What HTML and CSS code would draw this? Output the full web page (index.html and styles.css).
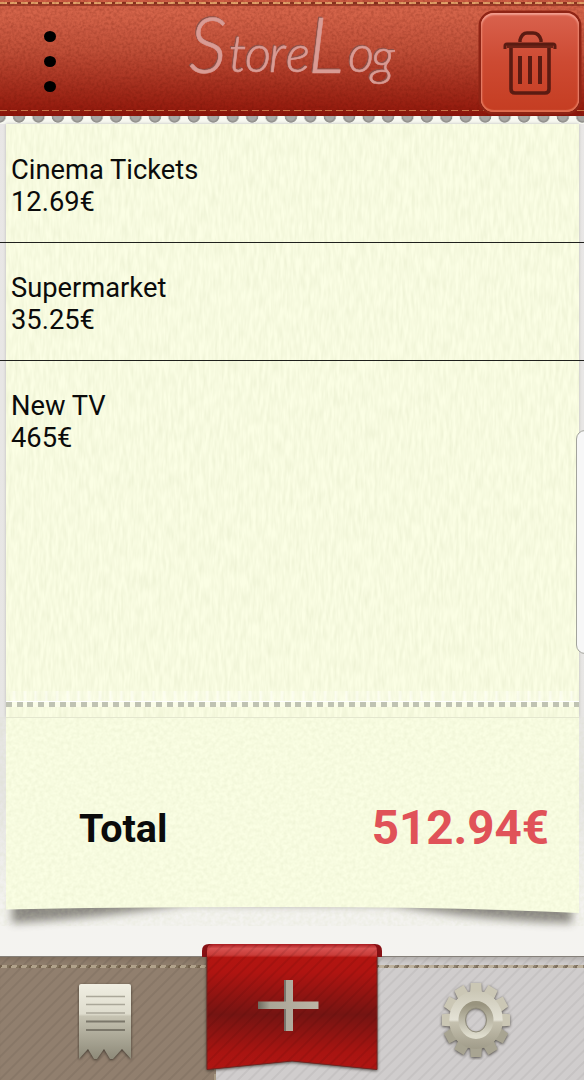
FILE: index.html
```
<!DOCTYPE html>
<html lang="en">
<head>
  <meta charset="UTF-8">
  <meta name="viewport" content="width=device-width, initial-scale=1.0">
  <title>StoreLog</title>
  <link rel="stylesheet" href="styles.css">
</head>
<body>
<div class="app">

  <header class="header">
    <svg class="grain" aria-hidden="true">
      <filter id="leather" color-interpolation-filters="sRGB">
        <feTurbulence type="fractalNoise" baseFrequency="0.35" numOctaves="2"/>
        <feColorMatrix values="0 0 0 0 0.35  0 0 0 0 0.05  0 0 0 0 0  0.45 0 0 0 -0.16"/>
      </filter>
      <rect width="100%" height="100%" filter="url(#leather)"/>
    </svg>
    <button class="menu" aria-label="Menu"><i></i><i></i><i></i></button>
    <svg class="logo" width="240" height="110" viewBox="0 0 240 110">
      <text class="small" y="72"><tspan class="big" x="9" y="73">S</tspan><tspan x="49 65 89 106" y="72">tore</tspan><tspan class="big" x="128" y="73">L</tspan><tspan x="168 191" y="72 75">og</tspan></text>
    </svg>
    <button class="trash" aria-label="Delete">
      <svg width="54" height="66" viewBox="0 0 54 66" fill="none" stroke="#5b1b12">
        <path d="M17 12v-2q2-7 7-7h6q6 0 8 7v2" stroke-width="3.4"/>
        <path d="M2 19v-3q0-2 2-2h46q2 0 2 2v3" stroke-width="3"/>
        <path d="M4 15.500h46" stroke-width="5" opacity=".85"/>
        <path d="M8 18v41q0 4 4 4h30q4 0 4-4V18" stroke-width="3.600"/>
        <path d="M17 26v28M27 26v28M37 26v28" stroke-width="4"/>
      </svg>
    </button>
  </header>
  <div class="perforation"></div>

  <main class="paper">
    <svg class="grain" aria-hidden="true">
      <filter id="fiber" color-interpolation-filters="sRGB">
        <feTurbulence type="fractalNoise" baseFrequency="0.32 0.06" numOctaves="2"/>
        <feColorMatrix values="0 0 0 0 0.8  0 0 0 0 0.83  0 0 0 0 0.68  0.42 0 0 0 -0.12"/>
      </filter>
      <rect width="100%" height="100%" filter="url(#fiber)"/>
    </svg>
    <ul class="items">
      <li><span>Cinema Tickets</span><span class="price">12.69€</span></li>
      <li><span>Supermarket</span><span class="price">35.25€</span></li>
      <li><span>New TV</span><span class="price">465€</span></li>
    </ul>
    <div class="tear"></div>
  </main>

  <section class="total">
    <svg class="sheet" width="584" height="238" viewBox="0 0 584 238" aria-hidden="true">
      <defs>
        <filter id="soft" x="-5%" y="-50%" width="110%" height="200%"><feGaussianBlur stdDeviation="4"/></filter>
        <filter id="pulp" color-interpolation-filters="sRGB">
          <feTurbulence type="fractalNoise" baseFrequency="0.25" numOctaves="2"/>
          <feColorMatrix values="0 0 0 0 0.8  0 0 0 0 0.83  0 0 0 0 0.68  0.35 0 0 0 -0.1"/>
        </filter>
      </defs>
      <path d="M12 180L572 180V206Q480 204 390 188L190 187Q90 202 12 206Z" fill="#77736e" opacity=".85" filter="url(#soft)"/>
      <path d="M6 0H579V196Q450 190 300 190Q120 190 6 192.500Z" fill="#fafee3"/>
      <rect x="6" y="0" width="573" height="190" filter="url(#pulp)"/>
      <path d="M6 .5H579" stroke="#e4e7cf"/>
    </svg>
    <strong class="label">Total</strong>
    <strong class="sum">512.94€</strong>
  </section>

  <nav class="tabs">
    <a class="tab tab-list" href="#" aria-label="Receipts">
      <svg width="60" height="84" viewBox="0 0 60 84">
        <defs>
          <linearGradient id="receipt" x1="0" y1="0" x2="0" y2="1">
            <stop offset="0" stop-color="#f0eee2"/>
            <stop offset=".4" stop-color="#dedccd"/>
            <stop offset=".43" stop-color="#c6c3b2"/>
            <stop offset="1" stop-color="#8e8a79"/>
          </linearGradient>
        </defs>
        <path class="lift" d="M4 2H52q2 0 2 2V77L45 67L36 77H33L27 67L20 77H17L11 67L2 77V4q0-2 2-2Z" fill="url(#receipt)"/>
        <path d="M9 14.500H48M9 22.500H48M9 31H48" stroke="#aaa799" stroke-width="1.500"/>
        <path d="M9 39.500H48M9 48H48" stroke="#7b776a" stroke-width="2"/>
      </svg>
    </a>
    <a class="tab tab-settings" href="#" aria-label="Settings">
      <svg width="76" height="80" viewBox="-38 -40 76 80">
        <defs>
          <linearGradient id="metal" gradientUnits="userSpaceOnUse" x1="0" y1="-36" x2="0" y2="36">
            <stop offset="0" stop-color="#c5c1ae"/>
            <stop offset=".5" stop-color="#e4e2d6"/>
            <stop offset=".53" stop-color="#c5c1af"/>
            <stop offset="1" stop-color="#979280"/>
          </linearGradient>
          <linearGradient id="bevel" x1="0" y1="0" x2="0" y2="1">
            <stop offset="0" stop-color="#99947f"/>
            <stop offset="1" stop-color="#dedccd"/>
          </linearGradient>
          <path id="tooth" d="M-6.500 -26L-5.800 -37H5.800L6.500 -26Z"/>
        </defs>
        <g class="lift" fill="url(#metal)" transform="scale(.92 1)">
          <path fill-rule="evenodd" d="M0 -29A29 29 0 1 1 0 29A29 29 0 1 1 0 -29ZM0 -12A12 12 0 1 0 0 12A12 12 0 1 0 0 -12Z"/>
          <g fill="#cbc7b5">
            <use href="#tooth"/>
            <use href="#tooth" transform="rotate(30)"/>
            <use href="#tooth" transform="rotate(60)"/>
            <use href="#tooth" transform="rotate(90)"/>
            <use href="#tooth" transform="rotate(270)"/>
            <use href="#tooth" transform="rotate(300)"/>
            <use href="#tooth" transform="rotate(330)"/>
          </g>
          <g fill="#a8a492">
            <use href="#tooth" transform="rotate(120)"/>
            <use href="#tooth" transform="rotate(150)"/>
            <use href="#tooth" transform="rotate(180)"/>
            <use href="#tooth" transform="rotate(210)"/>
            <use href="#tooth" transform="rotate(240)"/>
          </g>
          <circle r="26" fill="none" stroke="url(#metal)" stroke-width="6"/>
        </g>
        <ellipse rx="14" ry="15.500" fill="none" stroke="url(#bevel)" stroke-width="7"/>
        <ellipse rx="10.500" ry="12" fill="none" stroke="#8f8b7a"/>
      </svg>
    </a>

    <a class="ribbon" href="#" aria-label="Add">
      <svg width="182" height="132" viewBox="0 0 182 132">
        <defs>
          <linearGradient id="cloth" x1="0" y1="0" x2="0" y2="1">
            <stop offset="0" stop-color="#b31511"/>
            <stop offset=".15" stop-color="#b01411"/>
            <stop offset=".52" stop-color="#761412"/>
            <stop offset=".85" stop-color="#a91411"/>
            <stop offset="1" stop-color="#b01512"/>
          </linearGradient>
          <linearGradient id="roll" x1="0" y1="0" x2="0" y2="1">
            <stop offset="0" stop-color="#a91c20"/>
            <stop offset=".35" stop-color="#d7504f"/>
            <stop offset=".85" stop-color="#c93c39"/>
            <stop offset="1" stop-color="#b81d19"/>
          </linearGradient>
          <linearGradient id="cut" x1="0" y1="0" x2="1" y2="0">
            <stop offset="0" stop-color="#6e6a5e"/>
            <stop offset=".2" stop-color="#aaa597"/>
            <stop offset="1" stop-color="#bbb5a6"/>
          </linearGradient>
          <pattern id="twill" width="8" height="8" patternUnits="userSpaceOnUse" patternTransform="rotate(45)">
            <rect width="2" height="8" fill="#300" opacity=".1"/>
          </pattern>
        </defs>
        <path d="M1 14V8Q1 1 8 1H174Q181 1 181 8V14H175V8H7V14Z" fill="#871014"/>
        <path class="lift" d="M6 12H176V126.500L91 118L6 126.500Z" fill="url(#cloth)" stroke="#74231f"/>
        <path d="M6 14V8Q6 1 12 1H170Q176 1 176 8V14Z" fill="url(#roll)"/>
        <path d="M6 2H176V126L91 118L6 126Z" fill="url(#twill)"/>
        <path d="M83 37H92V58.500H117.500V66H92V88H83V66H57V58.500H83Z" fill="url(#cut)"/>
        <path d="M84 37V58.500M84 66V88" stroke="#77736a" stroke-width="2"/>
      </svg>
    </a>
  </nav>

  <div class="edge-handle"></div>
</div>
</body>
</html>
```

FILE: styles.css
```
* {
  box-sizing: border-box;
}

body {
  margin: 0;
  font-family: Roboto, sans-serif;
  color: #0b0b0b;
}

button {
  border: none;
  background: none;
  padding: 0;
}

.app {
  position: relative;
  display: flex;
  flex-direction: column;
  width: 584px;
  height: 1080px;
  overflow: hidden;
  background: linear-gradient(#e9e7e6 0, #e7e6e4 800px, #f4f3f0 900px, #f4f3ef 100%);
}

.grain {
  position: absolute;
  top: 0;
  left: 0;
  width: 100%;
  height: 100%;
}

/* Header */
.header {
  position: relative;
  display: flex;
  justify-content: space-between;
  flex: none;
  height: 116px;
  background: linear-gradient(#cc5c43 0, #d5644a 12px, #c04f38 50px, #a22b1b 90px, #961c0f 108px, #8b150b 100%);
}

/* stitched seams */
.header::before,
.header::after {
  content: "";
  position: absolute;
  left: 0;
  right: 0;
  height: 2px;
  background: repeating-linear-gradient(90deg, #e2a268 0 7px, #8b3420 7px 10.5px);
}
.header::before {
  top: 2px;
  box-shadow: 0 2px 0 rgba(110, 30, 15, 0.5);
}
.header::after {
  bottom: 5px;
  height: 1.5px;
  background: repeating-linear-gradient(90deg, #c87448 0 7px, #8b2413 7px 10.5px);
}

.menu {
  position: relative;
  display: flex;
  flex-direction: column;
  gap: 14px;
  width: 100px;
  padding: 31px 0 0 44px;
}
.menu i {
  width: 12px;
  height: 11px;
  border-radius: 50%;
  background: #000;
}

.logo {
  position: relative;
  margin-left: 18px;
  overflow: visible;
  font-family: Lato, sans-serif;
  font-style: italic;
  font-weight: 300;
  fill: #d99b94;
  stroke: #d99b94;
  stroke-width: 0.6px;
  filter: drop-shadow(-1px -0.5px 0.5px #8b5149);
}
.logo .small {
  font-size: 51px;
}
.logo .big {
  font-size: 76px;
}

.trash {
  position: relative;
  z-index: 1;
  width: 98px;
  height: 99px;
  margin: 13px 5px 0 0;
  padding-top: 3px;
  border-radius: 13px;
  background: linear-gradient(#d9624e, #cd4a32 50%, #c53d22);
  box-shadow: 0 0 0 2.5px #8e2415, inset 0 2px 2px #f3a092, inset 0 -2px 1px #e06e50, inset 1px 0 2px #e67961, inset -1px 0 2px #e67961;
}

/* Receipt paper */
.perforation {
  flex: none;
  height: 8px;
  background:
    radial-gradient(ellipse 6.5px 7px at 50% 0, #a5a4a1 0, #aaa9a6 60%, #898884 90%, transparent 100%) -10.1px 0 / 19.43px 8px repeat-x,
    #f7f8f0;
}

.paper {
  position: relative;
  flex: none;
  height: 593px;
}
.paper .grain {
  left: 6px;
  width: 573px;
  background: #fbfee4;
  box-shadow: 0 0 3px #bcbcb8;
}

.items {
  position: relative;
  height: 577px;
  margin: 0;
  padding: 0;
  list-style: none;
  font-size: 27.3px;
  line-height: 32.2px;
}
.items li {
  display: flex;
  flex-direction: column;
  height: 118px;
  padding: 29px 11px 0 11px;
}
.items li + li {
  border-top: 1px solid #20211d;
}
.items li:first-child {
  padding-top: 30px;
}

.tear {
  position: relative;
  height: 6px;
  margin: 0 5px 0 6px;
  border-top: 1px solid #fff;
  background: repeating-linear-gradient(90deg, #c0c3b3 0 6px, #fbfde9 6px 10.72px);
}

/* jagged light fringe over the dashes */
.tear::before {
  content: "";
  position: absolute;
  top: -11px;
  left: 0;
  right: 0;
  height: 10px;
  background: repeating-linear-gradient(90deg, rgba(255, 255, 250, 0.2) 0 6px, #fffffa 8px, rgba(255, 255, 250, 0.2) 10.72px);
  opacity: 0.6;
}

/* Total */
.total {
  position: relative;
  display: flex;
  justify-content: space-between;
  align-items: baseline;
  flex: none;
  height: 239px;
  padding: 83px 35px 0 79px;
}
.sheet {
  position: absolute;
  top: 0;
  left: 0;
}
.label {
  position: relative;
  top: -2px;
  font-size: 39.5px;
}
.sum {
  position: relative;
  font-size: 47.5px;
  color: #e05258;
}

/* Bottom bar */
.tabs {
  position: relative;
  display: flex;
  flex: none;
  height: 124px;
  border-top: 1px solid #858079;
}
.tabs::before {
  content: "";
  position: absolute;
  top: 8px;
  left: 0;
  width: 100%;
  height: 3px;
  background: repeating-linear-gradient(115deg, #6c5a44 0 2px, #b9ab92 2px 7px, #7e7059 7px 9px);
  opacity: 0.8;
}
.tab {
  padding-top: 25px;
  box-shadow: inset 0 7px 5px -4px rgba(60, 50, 40, 0.2);
}
.tab-list {
  width: 216px;
  padding-left: 77px;
  background: repeating-linear-gradient(135deg, #917f6e 0 5px, #887767 6px 7px, #917f6e 8px);
  border-right: 2px dashed #a89a83;
}
.tab-settings {
  flex: 1;
  padding: 23px 0 0 222px;
  background: repeating-linear-gradient(135deg, #d0cdcd 0 5px, #c6c3c3 6px 7px, #d0cdcd 8px);
}
.lift {
  filter: drop-shadow(0 1px 1.5px rgba(30, 25, 20, 0.7));
}

.ribbon {
  position: absolute;
  top: -14px;
  left: 201px;
}

/* system edge panel handle */
.edge-handle {
  position: absolute;
  top: 430px;
  right: -10px;
  width: 18px;
  height: 224px;
  border: 1px solid #a3a49c;
  border-radius: 9px;
  background: #f7f7f7;
}
```
